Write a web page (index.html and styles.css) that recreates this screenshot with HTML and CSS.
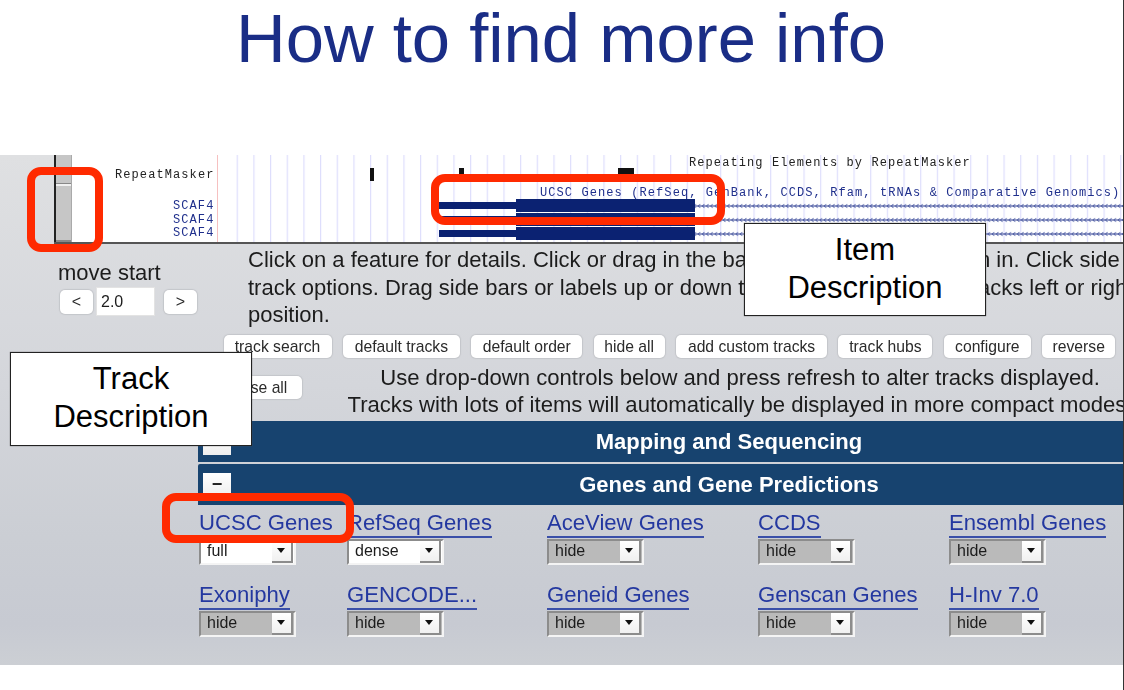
FILE: index.html
```html
<!DOCTYPE html>
<html lang="en">
<head>
<meta charset="utf-8">
<title>How to find more info</title>
<link rel="stylesheet" href="styles.css">
</head>
<body>
<div class="slide">
  <h1 class="title">How to find more info</h1>
  <div class="shot">
    <svg class="tracks" width="1124" height="89" viewBox="0 0 1124 89" aria-label="Genome browser tracks">
      <defs>
        <pattern id="grid" x="220" y="0" width="16.67" height="89" patternUnits="userSpaceOnUse">
          <rect x="0" y="0" width="1.2" height="89" fill="#dedefc"/>
        </pattern>
        <pattern id="hatch" x="0" y="48" width="4.2" height="14" patternUnits="userSpaceOnUse">
          <path d="M3 1L1 3L3 5" fill="none" stroke="#6c7ab4" stroke-width="1"/>
          <rect x="0" y="2.500" width="4.2" height="1" fill="#2a3a90"/>
        </pattern>
      </defs>
      <rect x="54" width="1070" height="88" fill="#fff"/>
      <rect x="230" width="894" height="88" fill="url(#grid)"/>
      <rect x="217" width="1" height="88" fill="#f6c0c0"/>
      <rect x="54" width="2" height="88" fill="#222"/>
      <rect x="56" width="16" height="87" fill="#c6c6c6"/>
      <rect x="56" y="28" width="16" height="1" fill="#888"/>
      <rect x="56" y="29" width="16" height="2" fill="#f0f0f0"/>
      <rect x="56" y="85" width="16" height="2" fill="#888"/>
      <rect x="71" width="1" height="87" fill="#aaa"/>
      <text class="label" x="115" y="23">RepeatMasker</text>
      <text class="label blue" x="173" y="54">SCAF4</text>
      <text class="label blue" x="173" y="67.500">SCAF4</text>
      <text class="label blue" x="173" y="81">SCAF4</text>
      <rect x="370" y="13" width="4" height="13" fill="#111"/>
      <rect x="459" y="13" width="5" height="13" fill="#111"/>
      <rect x="618" y="13" width="16" height="13" fill="#111"/>
      <text class="label" x="689" y="11">Repeating Elements by RepeatMasker</text>
      <text class="label blue" x="540" y="41">UCSC Genes (RefSeq, GenBank, CCDS, Rfam, tRNAs &amp; Comparative Genomics)</text>
      <rect x="439" y="47" width="77" height="7" fill="#0b2272"/>
      <rect x="516" y="44" width="179" height="13" fill="#0b2272"/>
      <rect x="439" y="61" width="77" height="7" fill="#0b2272"/>
      <rect x="516" y="58" width="179" height="13" fill="#0b2272"/>
      <rect x="439" y="75" width="77" height="7" fill="#0b2272"/>
      <rect x="516" y="72" width="179" height="13" fill="#0b2272"/>
      <rect x="695" y="48" width="429" height="6" fill="url(#hatch)"/>
      <rect x="695" y="62" width="429" height="6" fill="url(#hatch)"/>
      <rect x="695" y="76" width="429" height="6" fill="url(#hatch)"/>
      <rect x="54" y="87" width="1070" height="2" fill="#555"/>
    </svg>

    <div class="controls">
      <div class="move">
        <div class="move-label">move start</div>
        <div class="move-row">
          <span class="btn small">&lt;</span>
          <span class="move-input">2.0</span>
          <span class="btn small next">&gt;</span>
        </div>
      </div>
      <div class="help">
        <div>Click on a feature for details. Click or drag in the base position track to zoom in. Click side bars for</div>
        <div>track options. Drag side bars or labels up or down to reorder tracks. Drag tracks left or right to new</div>
        <div>position.</div>
      </div>
    </div>

    <div class="btn-row">
      <span class="btn w1">track search</span>
      <span class="btn w2">default tracks</span>
      <span class="btn w3">default order</span>
      <span class="btn w4">hide all</span>
      <span class="btn w5">add custom tracks</span>
      <span class="btn w6">track hubs</span>
      <span class="btn w7">configure</span>
      <span class="btn w8">reverse</span>
    </div>

    <div class="note-row">
      <span class="btn close">close all</span>
      <div class="note">
        <div>Use drop-down controls below and press refresh to alter tracks displayed.</div>
        <div>Tracks with lots of items will automatically be displayed in more compact modes.</div>
      </div>
    </div>

    <div class="bars">
      <div class="bar"><span class="toggle">+</span><span class="bar-title">Mapping and Sequencing</span></div>
      <div class="bar"><span class="toggle">&minus;</span><span class="bar-title">Genes and Gene Predictions</span></div>
    </div>

    <div class="grid">
      <div class="cell"><a class="link">UCSC Genes</a><div class="sel on">full<i class="arrow"></i></div></div>
      <div class="cell"><a class="link">RefSeq Genes</a><div class="sel on">dense<i class="arrow"></i></div></div>
      <div class="cell"><a class="link">AceView Genes</a><div class="sel">hide<i class="arrow"></i></div></div>
      <div class="cell"><a class="link">CCDS</a><div class="sel">hide<i class="arrow"></i></div></div>
      <div class="cell"><a class="link">Ensembl Genes</a><div class="sel">hide<i class="arrow"></i></div></div>
      <div class="cell"><a class="link">Exoniphy</a><div class="sel">hide<i class="arrow"></i></div></div>
      <div class="cell"><a class="link">GENCODE...</a><div class="sel">hide<i class="arrow"></i></div></div>
      <div class="cell"><a class="link">Geneid Genes</a><div class="sel">hide<i class="arrow"></i></div></div>
      <div class="cell"><a class="link">Genscan Genes</a><div class="sel">hide<i class="arrow"></i></div></div>
      <div class="cell"><a class="link">H-Inv 7.0</a><div class="sel">hide<i class="arrow"></i></div></div>
    </div>
  </div>

  <div class="callout item">Item<br>Description</div>
  <div class="callout track">Track<br>Description</div>
  <div class="ring ring-side"></div>
  <div class="ring ring-item"></div>
  <div class="ring ring-link"></div>
  <div class="edge"></div>
</div>
</body>
</html>
```
FILE: styles.css
```css
* { box-sizing: border-box; }
html, body { margin: 0; padding: 0; background: #fff; }
body { font-family: "Liberation Sans", Arial, sans-serif; }
.slide {
  position: relative;
  width: 1124px;
  height: 690px;
  overflow: hidden;
  background: #fff;
}
.title {
  margin: 0;
  height: 155px;
  text-align: center;
  font-size: 68.800px;
  line-height: 77px;
  font-weight: 400;
  color: #1a2d86;
  transform: translateX(-1px);
}
.shot {
  height: 510px;
  background: linear-gradient(180deg, #dfe0e2 0%, #d4d6db 45%, #cbced4 75%, #c7cad2 92%, #cccfd4 100%);
  overflow: hidden;
  filter: blur(0.35px);
}
.tracks { display: block; }
.label {
  font-family: "Liberation Mono", monospace;
  font-size: 12px;
  letter-spacing: 1.09px;
  fill: #222;
}
.label.blue { fill: #1f2f8c; }

.controls {
  display: flex;
  height: 89px;
  color: #1c1c1c;
}
.move { flex: none; width: 248px; padding: 17px 0 0 58px; }
.move-label { font-size: 22px; line-height: 24px; }
.move-row { display: flex; align-items: center; gap: 3px; margin: 2px 0 0 2px; }
.move-input {
  width: 59px;
  height: 29px;
  padding-left: 4px;
  background: #fff;
  border: 1px solid #e3e3e3;
  font-size: 16px;
  line-height: 27px;
}
.btn.next { margin-left: 6px; }
.help {
  flex: none;
  white-space: nowrap;
  font-size: 22px;
  line-height: 27.500px;
  padding-top: 2px;
  color: #1c1c1c;
}
.btn {
  display: inline-block;
  height: 23px;
  background: #fff;
  border-radius: 5px;
  box-shadow: 0 0 1px 1px #c4c6ca;
  font-size: 15.700px;
  line-height: 23px;
  color: #2b2b2b;
  text-align: center;
  white-space: nowrap;
}
.btn.small { flex: none; width: 33px; height: 24px; font-size: 16px; }
.btn-row {
  display: flex;
  gap: 11.400px;
  height: 31px;
  padding: 2px 0 0 223.500px;
  white-space: nowrap;
}
.btn-row .btn { flex: none; }
.w1 { width: 108px; }
.w2 { width: 117px; }
.w3 { width: 111px; }
.w4 { width: 71px; }
.w5 { width: 151px; }
.w6 { width: 94px; }
.w7 { width: 87px; }
.w8 { width: 73px; }
.note-row {
  display: flex;
  height: 57px;
}
.btn.close { flex: none; width: 86px; margin: 12px 0 0 216px; }
.note {
  flex: none;
  width: 808px;
  margin-left: 34px;
  text-align: center;
  white-space: nowrap;
  font-size: 22.100px;
  line-height: 27px;
  color: #1c1c1c;
}
.bars { margin-left: 198px; }
.bar {
  position: relative;
  height: 41px;
  margin-bottom: 2px;
  background: #17436f;
  border-radius: 2px 0 0 0;
}
.toggle {
  position: absolute;
  left: 5px;
  top: 9px;
  width: 28px;
  height: 25px;
  background: linear-gradient(180deg, #fff, #eee);
  color: #222;
  font-size: 18px;
  font-weight: 700;
  line-height: 23px;
  text-align: center;
}
.bar-title {
  display: block;
  padding-left: 136px;
  text-align: center;
  font-size: 22px;
  font-weight: 700;
  line-height: 41px;
  color: #fff;
}
.grid {
  display: grid;
  grid-template-columns: 148px 200px 211px 191px 1fr;
  grid-auto-rows: 72px;
  margin: 3px 0 0 199px;
}
.cell { display: flex; flex-direction: column; align-items: flex-start; }
.link {
  font-size: 22.100px;
  line-height: 26px;
  height: 30px;
  padding-top: 2px;
  color: #2438a0;
  border-bottom: 2px solid #3a4fa8;
  white-space: nowrap;
}
.sel {
  position: relative;
  width: 97px;
  height: 26px;
  margin-top: 1px;
  padding-left: 6px;
  background: #bababa;
  border: 2px solid #8c8c8c;
  border-right-color: #f4f4f4;
  border-bottom-color: #f4f4f4;
  font-size: 16px;
  line-height: 20px;
  color: #1c1c1c;
}
.sel.on { background: #fff; }
.arrow {
  position: absolute;
  right: 1px;
  top: 0;
  width: 21px;
  height: 22px;
  background: linear-gradient(180deg, #fff, #f0f0f0);
  border-right: 2px solid #8c8c8c;
  border-bottom: 2px solid #8c8c8c;
}
.arrow::after {
  content: "";
  position: absolute;
  left: 5px;
  top: 7px;
  border-left: 4px solid transparent;
  border-right: 4px solid transparent;
  border-top: 5px solid #111;
}

.callout {
  position: absolute;
  background: #fff;
  border: 1px solid #222;
  box-shadow: 0 0 1px #555;
  text-align: center;
  font-size: 31px;
  line-height: 38px;
  color: #000;
}
.callout.item { left: 744px; top: 223px; width: 242px; height: 93px; padding-top: 7px; }
.callout.track { left: 10px; top: 352px; width: 242px; height: 94px; padding-top: 7px; }
.ring {
  position: absolute;
  border: 8px solid #ff2a00;
  border-radius: 14px;
}
.ring-side { left: 27px; top: 167px; width: 76px; height: 85px; }
.ring-item { left: 431px; top: 174px; width: 294px; height: 51px; }
.ring-link { left: 162px; top: 493px; width: 192px; height: 50px; }
.edge { position: absolute; right: 0; top: 0; width: 1px; height: 690px; background: #333; }
```
